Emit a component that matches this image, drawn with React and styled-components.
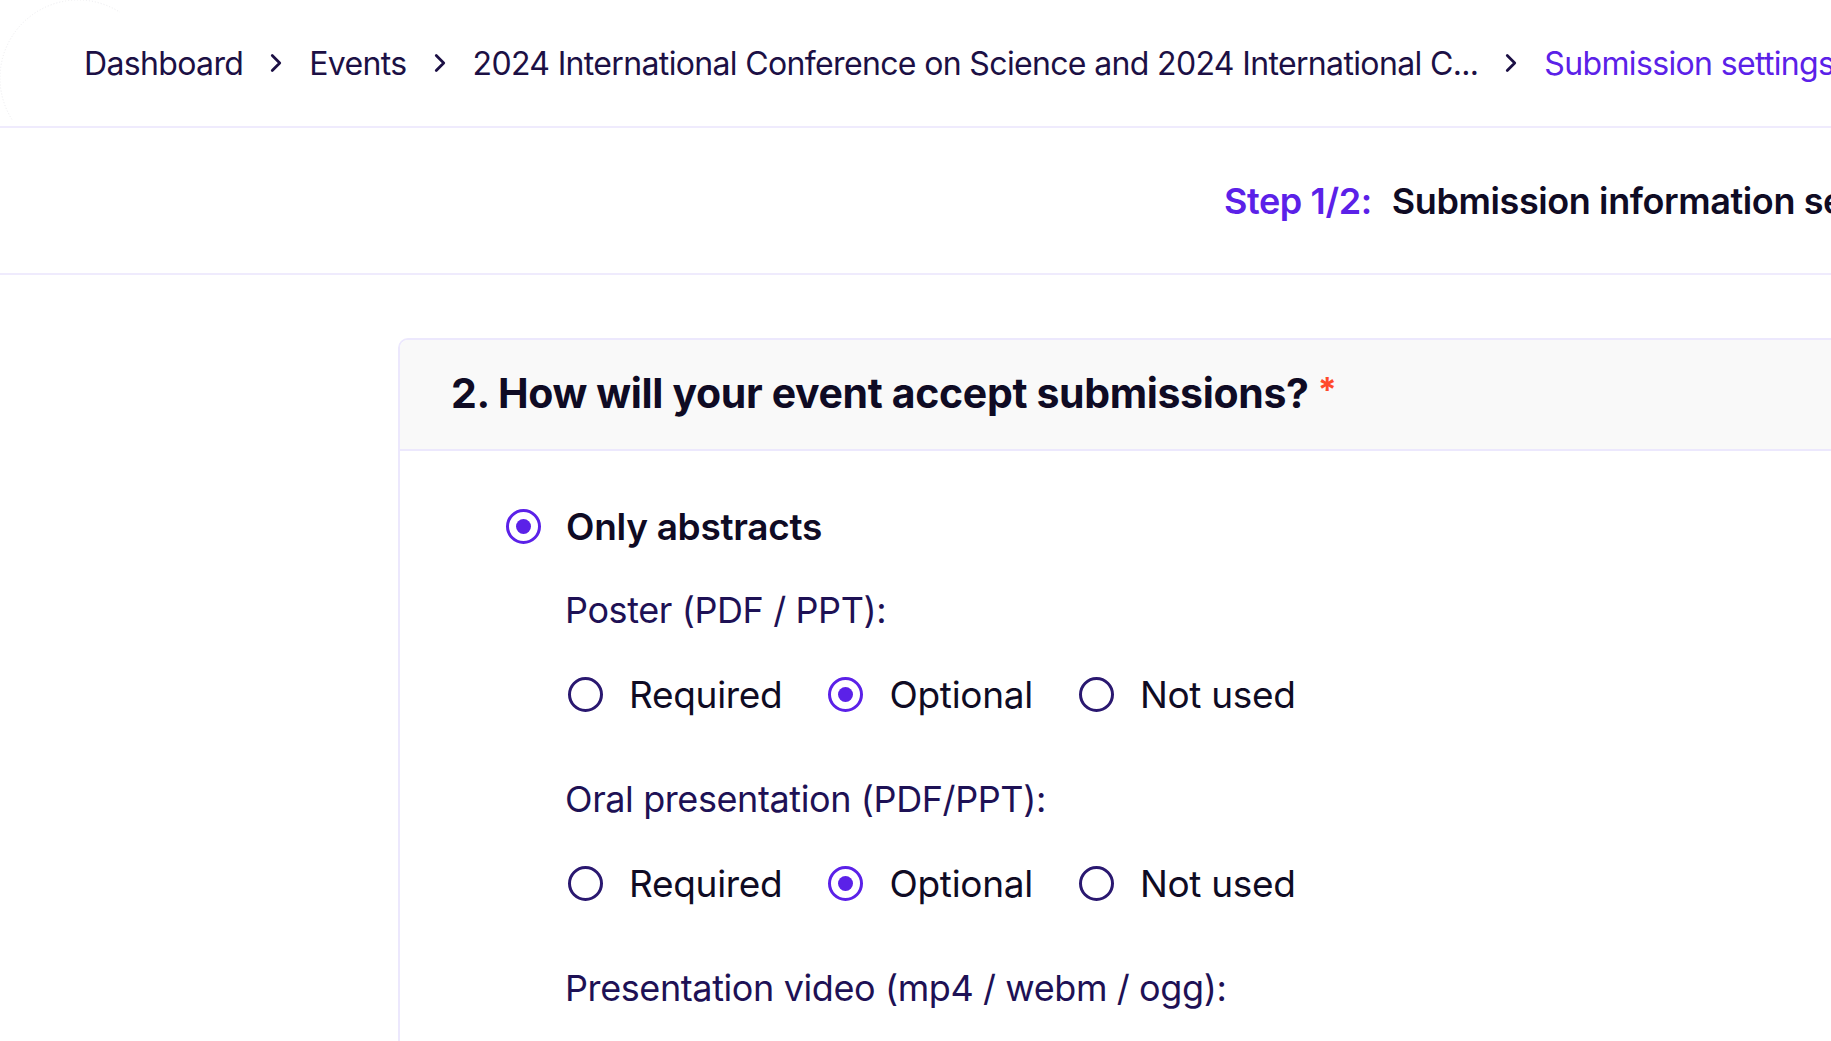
import styled, { createGlobalStyle } from 'styled-components';
import { ChevronRight } from 'lucide-react';

const GlobalStyle = createGlobalStyle`
  html, body {
    margin: 0;
    padding: 0;
    background: #ffffff;
  }
  body {
    font-family: Inter, "Noto Sans", sans-serif;
    overflow: hidden;
  }
  #root {
    width: 100vw;
    height: 100vh;
    overflow: hidden;
  }
`;

const Page = styled.div`
  display: flex;
  flex-direction: column;
  white-space: nowrap;
`;

const TopBar = styled.header`
  position: relative;
  height: 126px;
  display: flex;
  align-items: center;
  padding-left: 84px;
  border-bottom: 2px solid #efebfd;
`;

const Ring = styled.svg`
  position: absolute;
  left: 0;
  top: 0;
`;

const Crumb = styled.span`
  font-size: 32px;
  letter-spacing: -0.65px;
  color: ${p => (p.$active ? '#5b21e8' : '#1c1045')};
`;

const Sep = styled(ChevronRight)`
  flex: none;
  margin: 0 18px;
  color: #1c1045;
`;

const StepBar = styled.div`
  height: 145px;
  display: flex;
  align-items: center;
  gap: 20px;
  padding-left: 1224px;
  border-bottom: 2px solid #efebfd;
  font-size: 36px;
  font-weight: 600;
  letter-spacing: -0.4px;
`;

const StepNo = styled.span`
  color: #5b21e8;
`;

const StepTitle = styled.span`
  color: #0f0b24;
`;

const Main = styled.main`
  display: flex;
  padding: 63px 0 0 398px;
`;

const Card = styled.section`
  flex: none;
  width: 1600px;
  border: 2px solid #ece8fd;
  border-radius: 10px;
  overflow: hidden;
`;

const CardHeader = styled.div`
  box-sizing: border-box;
  height: 111px;
  display: flex;
  align-items: center;
  padding: 0 0 4px 51px;
  background: #f9f9f9;
  border-bottom: 2px solid #ece8fd;
`;

const Question = styled.h2`
  margin: 0;
  font-size: 41px;
  font-weight: 700;
  letter-spacing: -0.35px;
  color: #0f0b24;
`;

const Star = styled.span`
  position: relative;
  top: -6px;
  margin-left: 9px;
  font-size: 34px;
  font-weight: 700;
  color: #ff4a2b;
`;

const CardBody = styled.div`
  display: flex;
  flex-direction: column;
  padding: 52px 0 80px 106px;
`;

const Option = styled.label`
  height: 46px;
  display: flex;
  align-items: center;
  gap: ${p => (p.$main ? 25 : 26)}px;
  font-size: 37px;
  font-weight: ${p => (p.$main ? 600 : 400)};
  letter-spacing: -0.3px;
  color: #0f0b24;
`;

const Dot = styled.span`
  flex: none;
  box-sizing: border-box;
  width: 35px;
  height: 35px;
  border-radius: 50%;
  border: 3px solid ${p => (p.$on ? '#5b21e8' : '#2a1870')};
  display: flex;
  align-items: center;
  justify-content: center;
  &::after {
    content: '';
    width: 15px;
    height: 15px;
    border-radius: 50%;
    background: ${p => (p.$on ? '#5b21e8' : 'transparent')};
  }
`;

const SubOptions = styled.div`
  display: flex;
  flex-direction: column;
  gap: 62px;
  margin-top: 41px;
  padding-left: 59px;
`;

const Field = styled.div`
  display: flex;
  flex-direction: column;
  gap: 41px;
`;

const FieldLabel = styled.div`
  height: 40px;
  display: flex;
  align-items: center;
  font-size: 36px;
  letter-spacing: -0.4px;
  color: #1e1155;
`;

const Choices = styled.div`
  display: flex;
  align-items: center;
  gap: 46px;
  padding-left: 3px;
`;

const CHOICES = ['Required', 'Optional', 'Not used'];

const Radio = ({ on, children, main }) => (
  <Option $main={main}>
    <Dot $on={on} />
    {children}
  </Option>
);

const UsageField = ({ label, value }) => (
  <Field>
    <FieldLabel>{label}</FieldLabel>
    {value && (
      <Choices>
        {CHOICES.map(c => (
          <Radio key={c} on={c === value}>{c}</Radio>
        ))}
      </Choices>
    )}
  </Field>
);

const App = () => (
  <Page>
    <GlobalStyle />
    <TopBar>
      <Ring width="120" height="120" viewBox="0 0 120 120">
        <circle cx="78" cy="78" r="78" fill="none" stroke="#ececef" strokeWidth="1" strokeDasharray="1 2" />
      </Ring>
      <Crumb>Dashboard</Crumb>
      <Sep size={30} strokeWidth={2.2} />
      <Crumb>Events</Crumb>
      <Sep size={30} strokeWidth={2.2} />
      <Crumb>2024 International Conference on Science and 2024 International C...</Crumb>
      <Sep size={30} strokeWidth={2.2} />
      <Crumb $active>Submission settings</Crumb>
    </TopBar>
    <StepBar>
      <StepNo>Step 1/2:</StepNo>
      <StepTitle>Submission information settings</StepTitle>
    </StepBar>
    <Main>
      <Card>
        <CardHeader>
          <Question>
            2. How will your event accept submissions?<Star>*</Star>
          </Question>
        </CardHeader>
        <CardBody>
          <Radio main on>Only abstracts</Radio>
          <SubOptions>
            <UsageField label="Poster (PDF / PPT):" value="Optional" />
            <UsageField label="Oral presentation (PDF/PPT):" value="Optional" />
            <UsageField label="Presentation video (mp4 / webm / ogg):" value="Optional" />
          </SubOptions>
        </CardBody>
      </Card>
    </Main>
  </Page>
);

export default App;
